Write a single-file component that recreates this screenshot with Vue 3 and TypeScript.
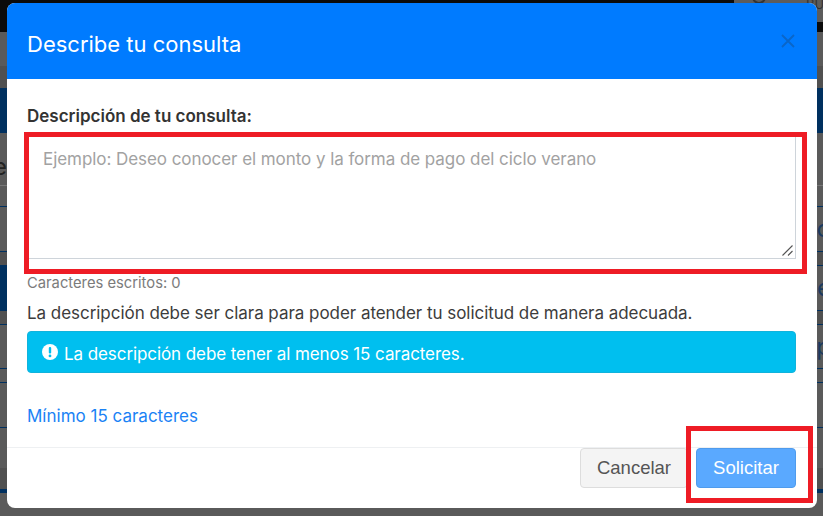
<script setup lang="ts">
// franja de la página que queda detrás del modal
const bands = [
  { h: 32, c: 'band--top' },
  { h: 34, c: 'band--grey' },
  { h: 22, c: 'band--dark' },
  { h: 45, c: 'band--navy' },
  { h: 52, c: 'band--grey band--low', left: 'e' },
  { h: 21, c: 'band--grey band--light-top' },
  { h: 45, c: 'band--grey band--line-top', right: 'o' },
  { h: 14, c: 'band--dark band--line-top' },
  { h: 45, c: 'band--split band--line-top', right: 'e' },
  { h: 14, c: 'band--dark band--line-top' },
  { h: 44, c: 'band--grey band--line-top', right: 'p' },
  { h: 14, c: 'band--grey band--line-top' },
  { h: 45, c: 'band--grey band--line-top' },
  { h: 41, c: 'band--grey band--line-top' },
  { h: 21, c: 'band--dark' },
  { h: 4, c: 'band--navy' },
  { h: 23, c: 'band--grey' },
]
</script>

<template>
  <div class="page">
    <div v-for="(band, i) in bands" :key="i" class="band" :class="band.c" :style="{ height: band.h + 'px' }">
      <span class="band__left">{{ band.left }}</span>
      <span class="band__right">{{ band.right }}</span>
    </div>

    <div class="top-extras">
      <span class="top-extras__ring"></span>
      <span class="top-extras__text">BU</span>
    </div>

    <div class="modal" role="dialog" aria-modal="true">
      <header class="modal__header">
        <h2 class="modal__title">Describe tu consulta</h2>
        <svg class="modal__close" width="14" height="14" viewBox="0 0 14 14" aria-label="Cerrar">
          <path d="M1 1 13 13M13 1 1 13" />
        </svg>
      </header>

      <div class="modal__body">
        <label class="field-label">Descripción de tu consulta:</label>
        <div class="field-wrap">
          <textarea class="field-input" placeholder="Ejemplo: Deseo conocer el monto y la forma de pago del ciclo verano"></textarea>
          <svg class="field-grip" width="11" height="11" viewBox="0 0 11 11">
            <path d="M0.5 10.5 10.5 0.5M6 10.5 10.5 6" />
          </svg>
        </div>
        <small class="field-count">Caracteres escritos: 0</small>
        <p class="field-help">La descripción debe ser clara para poder atender tu solicitud de manera adecuada.</p>
        <div class="alert">
          <svg class="alert__icon" width="16" height="16" viewBox="0 0 16 16">
            <circle cx="8" cy="8" r="8" fill="#fff" />
            <rect x="6.8" y="3" width="2.4" height="6.6" rx="1" fill="#00bfef" />
            <circle cx="8" cy="11.9" r="1.4" fill="#00bfef" />
          </svg>
          <span class="alert__text">La descripción debe tener al menos 15 caracteres.</span>
        </div>
        <a class="min-link">Mínimo 15 caracteres</a>
      </div>

      <footer class="modal__footer">
        <button type="button" class="btn btn--cancel">Cancelar</button>
        <button type="button" class="btn btn--submit">Solicitar</button>
      </footer>
    </div>

    <div class="mark mark--input"></div>
    <div class="mark mark--button"></div>
  </div>
</template>

<style scoped>
.page {
  position: relative;
  width: 823px;
  height: 516px;
  overflow: hidden;
  background: #5a5a5a;
  font-family: Inter, "Liberation Sans", sans-serif;
}

.band {
  box-sizing: border-box;
  display: flex;
  align-items: center;
  justify-content: space-between;
  font-size: 24px;
  line-height: 1;
}

.band__left {
  margin-left: -7px;
  color: #222;
}

.band__right {
  margin-right: -8px;
  color: #1c3a60;
}

.band--top {
  background: linear-gradient(90deg, #0b0b0b 734px, #5c5c5c 734px);
  border-bottom: 10px solid #0b0b0b;
}

.band--grey {
  background: #5a5a5a;
}

.band--low {
  padding-top: 16px;
}

.band--dark {
  background: #505050;
}

.band--navy {
  background: #00305f;
}

.band--split {
  background: linear-gradient(90deg, #00305f 411px, #5a5a5a 411px);
}

.band--light-top {
  border-top: 1px solid #777;
}

.band--line-top {
  border-top: 1px solid #00305f;
}

.top-extras {
  position: absolute;
  top: 0;
  left: 734px;
  right: 0;
  height: 22px;
  overflow: hidden;
}

.top-extras__ring {
  position: absolute;
  left: 18px;
  top: -10px;
  width: 10px;
  height: 10px;
  border: 2px solid #333;
  border-radius: 50%;
}

.top-extras__text {
  position: absolute;
  left: 72px;
  top: -4px;
  font-size: 13px;
  color: #333;
}

.modal {
  position: absolute;
  left: 7px;
  top: 3px;
  width: 810px;
  height: 505px;
  display: flex;
  flex-direction: column;
  background: #fff;
  border-radius: 8px;
  overflow: hidden;
}

.modal__header {
  height: 76px;
  flex: none;
  display: flex;
  align-items: center;
  justify-content: space-between;
  padding: 0 22px 0 20px;
  background: #007bff;
}

.modal__title {
  margin: 6px 0 0;
  color: #fff;
  font-size: 22px;
  font-weight: 400;
}

.modal__close {
  fill: none;
  stroke: #0a66c8;
  stroke-width: 1.8;
}

.modal__body {
  flex: 1;
  min-height: 0;
  display: flex;
  flex-direction: column;
  align-items: flex-start;
  padding: 26px 21px 0 20px;
  color: #3c3c3c;
}

.field-label {
  font-size: 17px;
  line-height: 22px;
  font-weight: 600;
  color: #333;
  margin-bottom: 10px;
}

.field-wrap {
  position: relative;
  width: 100%;
  height: 122px;
}

.field-input {
  box-sizing: border-box;
  display: block;
  width: 100%;
  height: 100%;
  padding: 10px 16px;
  border: 1px solid #ced4da;
  border-width: 0 1px 1px 0;
  outline: none;
  font: inherit;
  font-size: 17px;
  line-height: 24px;
  letter-spacing: -0.06px;
  resize: none;
}

.field-input::placeholder {
  color: #a2a2a2;
  opacity: 1;
}

.field-grip {
  position: absolute;
  right: 3px;
  bottom: 3px;
  fill: none;
  stroke: #555;
  stroke-width: 1.1;
}

.field-count {
  margin-top: 14px;
  font-size: 14.75px;
  line-height: 20px;
  color: #7b7b7b;
}

.field-help {
  margin: 8px 0 0;
  font-size: 17px;
  line-height: 24px;
  letter-spacing: -0.04px;
  color: #3c3c3c;
}

.alert {
  box-sizing: border-box;
  width: 100%;
  height: 42px;
  margin-top: 6px;
  padding: 0 14px;
  display: flex;
  align-items: center;
  gap: 6px;
  border: 1px solid #10b3dc;
  border-radius: 4px;
  background: #00bfef;
  color: #fff;
  font-size: 17px;
  letter-spacing: -0.08px;
}

.alert__text {
  padding-top: 3px;
}

.min-link {
  margin-top: 31px;
  font-size: 17px;
  line-height: 24px;
  color: #1a82f5;
}

.modal__footer {
  box-sizing: border-box;
  height: 61px;
  flex: none;
  display: flex;
  justify-content: flex-end;
  gap: 8px;
  padding: 0 21px 0 0;
  border-top: 1px solid #eef0f2;
}

.btn {
  box-sizing: border-box;
  height: 40px;
  border-radius: 4px;
  font-family: "Liberation Sans", Arial, sans-serif;
  font-size: 18.5px;
}

.btn--cancel {
  width: 108px;
  border: 1px solid #ddd;
  background: #f4f4f4;
  color: #555;
}

.btn--submit {
  width: 100px;
  border: 1px solid #4f9bec;
  background: #5aa9ff;
  color: #fff;
}

.mark {
  position: absolute;
  box-sizing: border-box;
  border: 5px solid #ee1c25;
  pointer-events: none;
}

.mark--input {
  left: 24px;
  top: 132px;
  width: 783px;
  height: 142px;
}

.mark--button {
  left: 686px;
  top: 426px;
  width: 127px;
  height: 77px;
}
</style>

<style>
html,
body {
  margin: 0;
  background: #5a5a5a;
}
</style>
